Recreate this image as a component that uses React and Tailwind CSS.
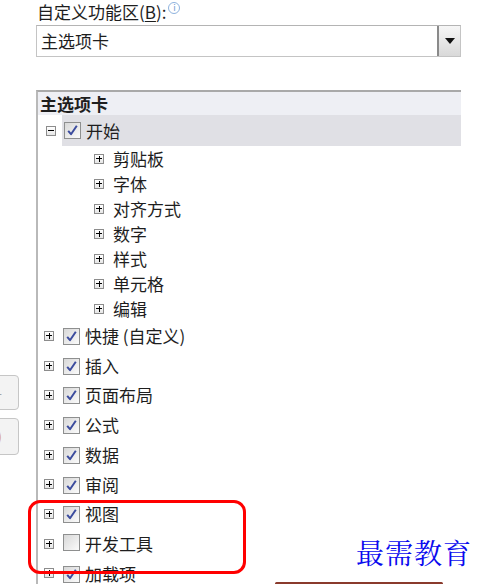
import React from 'react';

const FONT = { fontFamily: '"Noto Sans CJK SC", "Microsoft YaHei", sans-serif' };

function PlusBox({ minus }) {
  return (
    <span className="relative inline-block w-[10px] h-[10px] border border-[#8c8c8c] bg-gradient-to-b from-white to-[#e6e6e6] shrink-0">
      <span className="absolute left-[1px] right-[1px] top-[3.5px] h-[1px] bg-black" />
      {!minus && <span className="absolute top-[1px] bottom-[1px] left-[3.5px] w-[1px] bg-black" />}
    </span>
  );
}

function Check({ on }) {
  return (
    <span className="relative inline-flex items-center justify-center w-[17px] h-[17px] border border-[#8e8f8f] bg-gradient-to-br from-[#d8d8d8] to-[#fbfbfb] shrink-0">
      {on && (
        <svg width="13" height="13" viewBox="0 0 13 13">
          <path d="M2.2 6.8 L5 10.2 L10.8 1.8" fill="none" stroke="#3c4c9e" strokeWidth="2" strokeLinejoin="round" />
        </svg>
      )}
    </span>
  );
}

const subs = ['剪贴板', '字体', '对齐方式', '数字', '样式', '单元格', '编辑'];
const tops = [
  ['快捷 (自定义)', true],
  ['插入', true],
  ['页面布局', true],
  ['公式', true],
  ['数据', true],
  ['审阅', true],
  ['视图', true],
  ['开发工具', false],
  ['加载项', true],
];

export default function App() {
  return (
    <div className="relative w-[478px] h-[584px] overflow-hidden bg-white text-[#1e1e1e]" style={FONT}>
      <div className="pl-[37px] pr-[17px]">
        <div className="flex items-center h-[22px] pt-[1px] text-[17px] leading-[21px]">
          <span>自定义功能区(<span className="underline underline-offset-2">B</span>):</span>
          <span className="ml-[2px] -mt-[8px] inline-flex items-center justify-center w-[12px] h-[12px] rounded-full border border-[#8fb3de] text-[9px] leading-none text-[#6f9ad0]">i</span>
        </div>
        <div className="mt-[3px] -ml-[1px] flex h-[32px] border border-[#c4c4c4] border-t-[#b4b4b4]">
          <div className="flex-1 flex items-center pl-[4px] text-[17px]">主选项卡</div>
          <div className="w-[23px] flex items-center justify-center border-l-2 border-[#8a8a8a] bg-gradient-to-b from-[#f6f6f6] to-[#d9d9d9]">
            <svg width="10" height="6" viewBox="0 0 10 6"><path d="M0 0 H10 L5 6 Z" fill="#111" /></svg>
          </div>
        </div>
      </div>

      <div className="flex mt-[33px]">
        <div className="w-[36px] shrink-0 flex flex-col pt-[285px]">
          <div className="-ml-[22px] w-[41px] h-[35px] rounded-[4px] border border-[#c6c6c6] bg-[#f3f3f3] flex items-center justify-end pr-[16px] text-[#9a9a9a] text-[12px]">-</div>
          <div className="-ml-[22px] mt-[8px] w-[41px] h-[37px] rounded-[4px] border border-[#c6c6c6] bg-[#f3f3f3] flex items-center justify-end pr-[16px] text-[#d9a066] text-[15px]">)</div>
        </div>
        <div className="w-[425px] h-[600px] border-t-2 border-l-2 border-[#a9a9a9] border-l-[#b9b9b9] text-[17px]">
          <div className="h-[23px] bg-[#eeeff4] pl-[2px] font-bold leading-[23px]">主选项卡</div>
          <div className="flex items-center h-[31px]">
            <div className="w-[24px] flex justify-center pl-[2px]"><PlusBox minus /></div>
            <div className="flex-1 h-full flex items-center bg-[#e0e0e5] pl-[2px] gap-[5px]">
              <Check on />
              <span>开始</span>
            </div>
          </div>
          {subs.map((s) => (
            <div key={s} className="flex items-center h-[25px] pl-[56px]">
              <PlusBox />
              <span className="ml-[9px]">{s}</span>
            </div>
          ))}
          {tops.map(([t, on]) => (
            <div key={t} className="flex items-center h-[29.7px] pl-[6px]">
              <PlusBox />
              <span className="ml-[9px]"><Check on={on} /></span>
              <span className="ml-[5px]">{t}</span>
            </div>
          ))}
        </div>
      </div>

      <div className="absolute left-[28px] top-[500px] w-[218px] h-[74px] rounded-[12px] border-[3px] border-[#ff0000]" />
      <div
        className="absolute left-[356px] top-[535px] text-[28px] leading-[34px] tracking-[1px] text-[#0a0aee]"
        style={{ fontFamily: '"Noto Serif CJK SC", "AR PL UKai CN", "Noto Sans CJK SC", serif' }}
      >
        最需教育
      </div>
      <div className="absolute left-[275px] top-[582px] w-[168px] h-[3px] rounded-full bg-[#8a3a2c]" />
    </div>
  );
}
